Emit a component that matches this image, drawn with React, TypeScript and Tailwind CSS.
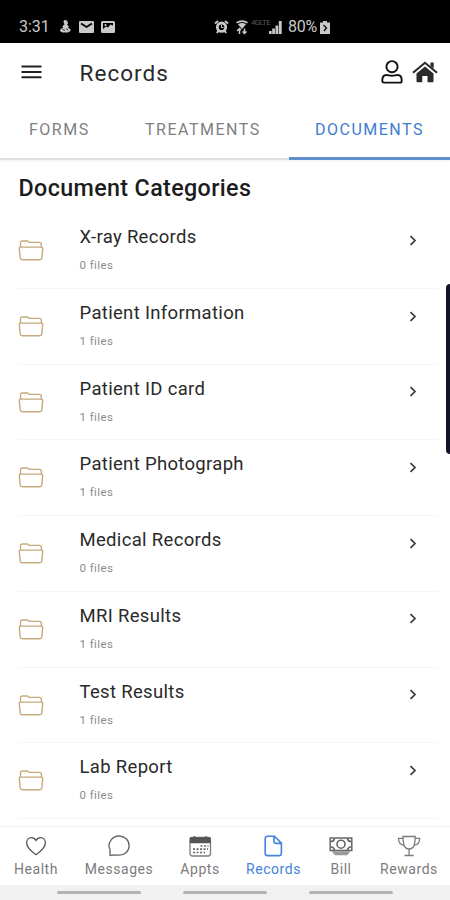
import type { ReactNode } from 'react'
import clsx from 'clsx'

const categories = [
  { name: 'X-ray Records', files: 0 },
  { name: 'Patient Information', files: 1 },
  { name: 'Patient ID card', files: 1 },
  { name: 'Patient Photograph', files: 1 },
  { name: 'Medical Records', files: 0 },
  { name: 'MRI Results', files: 1 },
  { name: 'Test Results', files: 1 },
  { name: 'Lab Report', files: 0 },
]

function StatusBar() {
  return (
    <div className="flex h-[43px] shrink-0 items-start bg-black pt-[17px] text-[#c9c9c9]">
      <div className="flex h-5 w-[214px] items-center pl-[19px]">
        <span className="w-[41px] text-[16px] leading-5">3:31</span>
        <svg className="mr-2 -mt-px" width="11" height="13" viewBox="0 0 11 13" fill="currentColor">
          <path d="M4 0l3 .5 1 2.500-.8 2L9 6.500l-1 1.500 2.500 1v2L8 12.500H2.500L0 11l.5-2L3 8 2.500 6 4.500 4.500 3.500 2z" />
          <path d="M2.500 9.500l2.500.8M6.500 8.500l1.500 2" stroke="#000" strokeWidth=".8" />
        </svg>
        <svg className="mr-[7px]" width="15" height="12" viewBox="0 0 15 12">
          <rect width="15" height="12" rx="1" fill="currentColor" />
          <path d="M2 2.500l5.500 3.500L13 2.500" fill="none" stroke="#000" strokeWidth="1.800" />
        </svg>
        <svg width="14" height="12" viewBox="0 0 14 12">
          <rect width="14" height="12" rx="1.500" fill="currentColor" />
          <path d="M2 2h10v2.500L9.500 3.500 7 6.500 5 5.500 2 8z" fill="#000" />
          <circle cx="4.500" cy="4" r="1.100" fill="currentColor" />
        </svg>
      </div>
      <div className="flex h-5 items-center">
        <svg width="15" height="14" viewBox="0 0 15 14" fill="none" stroke="currentColor">
          <circle cx="7.500" cy="7.200" r="4.200" strokeWidth="2.800" />
          <path d="M1 3.500L4 1M14 3.500L11 1M2.800 13l1.500-2M12.200 13l-1.500-2" strokeWidth="2" />
          <path d="M7.500 5v2.500H9.500" strokeWidth="1" />
        </svg>
        <svg className="ml-[7px]" width="12" height="15" viewBox="0 0 12 15" fill="none" stroke="currentColor">
          <path d="M.5 2.800Q6-.5 11.500 2.800" strokeWidth="1.600" />
          <path d="M2 4.200Q6 2 10 4.200L6 9z" fill="currentColor" stroke="none" />
          <path d="M1 11L3.500 8.500 5 10M3.500 9v5M8.500 8.500v4.500M6.500 11.500l2 2 2-2" strokeWidth="1.500" />
        </svg>
        <span className="ml-[3px] -mt-2 w-[18px] text-[8px] leading-3 tracking-[-0.7px] text-[#555]">4GLTE</span>
        <svg width="13" height="13" viewBox="0 0 13 13" fill="currentColor">
          <path d="M0 10h2.700v3H0zM3.200 7.500h2.700V13H3.200zM6.500 4.500h2.700V13H6.500zM9.800 0h2.900v13H9.800z" />
        </svg>
        <span className="ml-[6px] w-[32px] text-[16px] leading-5 tracking-[-0.3px]">80%</span>
        <svg width="10" height="13" viewBox="0 0 10 13">
          <path d="M3 0h4v1.500h3V13H0V1.500h3z" fill="currentColor" />
          <path d="M3.500 4L6.500 7 4 10" fill="none" stroke="#000" strokeWidth="1.200" />
        </svg>
      </div>
    </div>
  )
}

function Header() {
  return (
    <header className="flex h-[58px] shrink-0 items-center pl-[21px] pr-3">
      <svg className="shrink-0" width="21" height="14" viewBox="0 0 21 14" stroke="#222" strokeWidth="1.900">
        <path d="M.5 1.500h20M.5 7h20M.5 12.300h20" />
      </svg>
      <h1 className="ml-[37.5px] mt-px flex-1 text-[22.5px] leading-7 tracking-[1.050px] text-[#2a2a2a]">Records</h1>
      <svg className="mr-[9px]" width="22" height="24" viewBox="0 0 22 24" fill="none" stroke="#111" strokeWidth="1.900">
        <circle cx="11" cy="6.700" r="5.600" />
        <path d="M1.300 20.200c0-3.500 1.800-5.200 4.200-5.200 1.800 0 3 .7 5.500.7s3.700-.7 5.500-.7c2.400 0 4.200 1.700 4.200 5.200v.7q0 1.700-1.700 1.700H3q-1.700 0-1.700-1.700z" />
      </svg>
      <svg width="26" height="22" viewBox="0 0 26 22" fill="#2a2a2a">
        <path d="M13 5.500L4.500 12.600V20.500q0 .7.7.7H10.300V15h5.200v6.200h5.300q.7 0 .7-.7V12.600z" />
        <path d="M1 11.700L13 1.800l12 9.900" fill="none" stroke="#2a2a2a" strokeWidth="2.100" />
        <path d="M18.500 1.500h3.200v6l-3.200-2.500z" />
      </svg>
    </header>
  )
}

function Tabs() {
  return (
    <nav className="flex h-[59px] shrink-0 border-b-2 border-[#e0e0e0] text-[16px] leading-[57px] tracking-[1.5px] text-[#808080] shadow-[0_1px_2px_#eee]">
      <div className="w-[117px] pl-[29px]">FORMS</div>
      <div className="w-[172px] pl-7">TREATMENTS</div>
      <div className="-mb-0.5 flex-1 border-b-[3px] border-[#5f8fcd] pl-[26px] text-[#3d7dd0]">DOCUMENTS</div>
    </nav>
  )
}

function FolderIcon() {
  return (
    <svg className="mt-[27px] shrink-0" width="26" height="21" viewBox="0 0 26 21" fill="none" stroke="#c5aa7d" strokeWidth="1.400">
      <path d="M2.500 7.200V3q0-2 2-2H9q.8 0 1.400.7t1.500.7h9.300q2.200 0 2.200 2.100v2.700" />
      <path d="M2.700 7.100h20.600q1.500 0 1.400 1.500l-.9 9.300q-.2 1.800-2 1.800H4.200q-1.800 0-2-1.800L1.300 8.600q-.1-1.500 1.400-1.500z" />
    </svg>
  )
}

function CategoryRow({ name, files }: { name: string; files: number }) {
  return (
    <li className="ml-[18px] mr-3 flex h-[75.7px] shrink-0 items-start border-b border-[#f5f5f5]">
      <FolderIcon />
      <div className="ml-[35.5px] flex-1 pt-3">
        <p className="text-[18.5px] leading-6 tracking-[0.32px] text-[#2a2a2a]">{name}</p>
        <p className="mt-[7px] text-[11.5px] leading-[18px] tracking-[0.4px] text-[#8c8c8c]">{files} files</p>
      </div>
      <svg className="mr-[21px] mt-[21.6px]" width="8" height="11" viewBox="0 0 8 11" fill="none" stroke="#3a3a3a" strokeWidth="1.700">
        <path d="M1.500 1.200L6 5.500 1.500 9.800" />
      </svg>
    </li>
  )
}

function NavItem({ label, width, active, children }: { label: string; width: string; active?: boolean; children: ReactNode }) {
  return (
    <div className={clsx('flex flex-col items-center pt-[7px]', width, active ? 'text-[#4482dc]' : 'text-[#7c7c7c]')}>
      <svg width="24" height="24" viewBox="0 0 24 24" fill="none" stroke="currentColor" strokeWidth="1.300">
        {children}
      </svg>
      <span className="mt-px pl-px text-[14px] leading-5 tracking-[0.55px]">{label}</span>
    </div>
  )
}

function BottomNav() {
  return (
    <nav className="flex h-[59px] shrink-0 border-t border-[#f1f1f1] bg-white">
      <NavItem label="Health" width="w-[71px]">
        <path stroke="#555" d="M12 20.800C8.200 18.100 2.600 13.700 2.600 8.800c0-3 2.100-5.200 4.700-5.200 2.100 0 3.700 1.100 4.700 2.900 1-1.800 2.600-2.900 4.700-2.900 2.600 0 4.700 2.200 4.700 5.200 0 4.900-5.600 9.300-9.400 12z" />
      </NavItem>
      <NavItem label="Messages" width="w-[95px]">
        <path stroke="#666" d="M3 21.500V15.500C-.2 8.900 5.300 2 12.100 2c5.600 0 10 4.200 10 9.700s-4.400 9.500-10 9.500c-2.100 0-3.400-.3-4.800-.3z" />
      </NavItem>
      <NavItem label="Appts" width="w-[67px]">
        <rect x="2" y="3.500" width="20.500" height="18.500" rx="2.500" />
        <path d="M2.500 4h19.500v4.500h-19.500z" fill="#555" stroke="#555" />
        <path d="M6.500 2v2M18 2v2" stroke="#555" />
        <path d="M12.500 12h8M5 15.200h15M5 18.500h12" stroke="#666" strokeWidth="1.700" strokeDasharray="2 1.500" />
      </NavItem>
      <NavItem label="Records" width="w-[80px]" active>
        <path strokeWidth="1.600" d="M4.200 4.600q0-2.400 2.400-2.400h6.800l7 7v10q0 2.400-2.400 2.400H6.600q-2.400 0-2.400-2.400zM13 2.500V7.200q0 2.200 2.200 2.200h5" />
      </NavItem>
      <NavItem label="Bill" width="w-[55px]">
        <path d="M1.200 4h21.600v12.500H1.200z" stroke="#666" strokeWidth="1.500" />
        <circle cx="12" cy="10.200" r="4" stroke="#666" strokeWidth="1.600" />
        <path d="M2 7.500Q5 7.500 5.500 4.500M22 7.500q-3 0-3.500-3M2 13q3 0 3.500 3M22 13q-3 0-3.500 3" stroke="#666" strokeWidth="1.600" />
        <path d="M2.500 17.300h19l-3.500 4H6z" fill="#999" stroke="none" />
      </NavItem>
      <NavItem label="Rewards" width="w-[81px]">
        <path d="M6 2.500h12.200q0 5-.9 8.200c-.8 2.800-2.800 4.300-5.200 4.300s-4.400-1.500-5.200-4.300Q6 7.500 6 2.500zM6 4.300H1.500c0 3.700 2 6.500 5.500 7M18.200 4.300h4.500c0 3.700-2 6.500-5.500 7M12.100 15v6.200M7.500 21.500h9.200" />
      </NavItem>
    </nav>
  )
}

export default function App() {
  return (
    <div className="relative flex h-[900px] w-[450px] flex-col overflow-hidden bg-white font-[Roboto,sans-serif]">
      <StatusBar />
      <Header />
      <Tabs />
      <main className="flex min-h-0 flex-1 flex-col overflow-hidden">
        <h2 className="h-[53.4px] shrink-0 pl-[18.5px] pt-[12px] text-[23.3px] font-medium leading-8 tracking-[0.36px] text-[#1c1c1c]">
          Document Categories
        </h2>
        <ul className="flex flex-col">
          {categories.map((category) => (
            <CategoryRow key={category.name} name={category.name} files={category.files} />
          ))}
        </ul>
      </main>
      <BottomNav />

      {/* System gesture hints */}
      <div className="flex h-[15px] shrink-0 items-center justify-center gap-[42px] bg-[#f1f1f1]">
        <span className="h-[3px] w-[84px] rounded-full bg-[#b3b3b3]" />
        <span className="h-[3px] w-[84px] rounded-full bg-[#b3b3b3]" />
        <span className="h-[3px] w-[84px] rounded-full bg-[#b3b3b3]" />
      </div>

      {/* Edge panel handle */}
      <div className="absolute right-0 top-[284px] h-[170px] w-1 rounded-l-[4px] bg-[#15132c]" />
    </div>
  )
}
